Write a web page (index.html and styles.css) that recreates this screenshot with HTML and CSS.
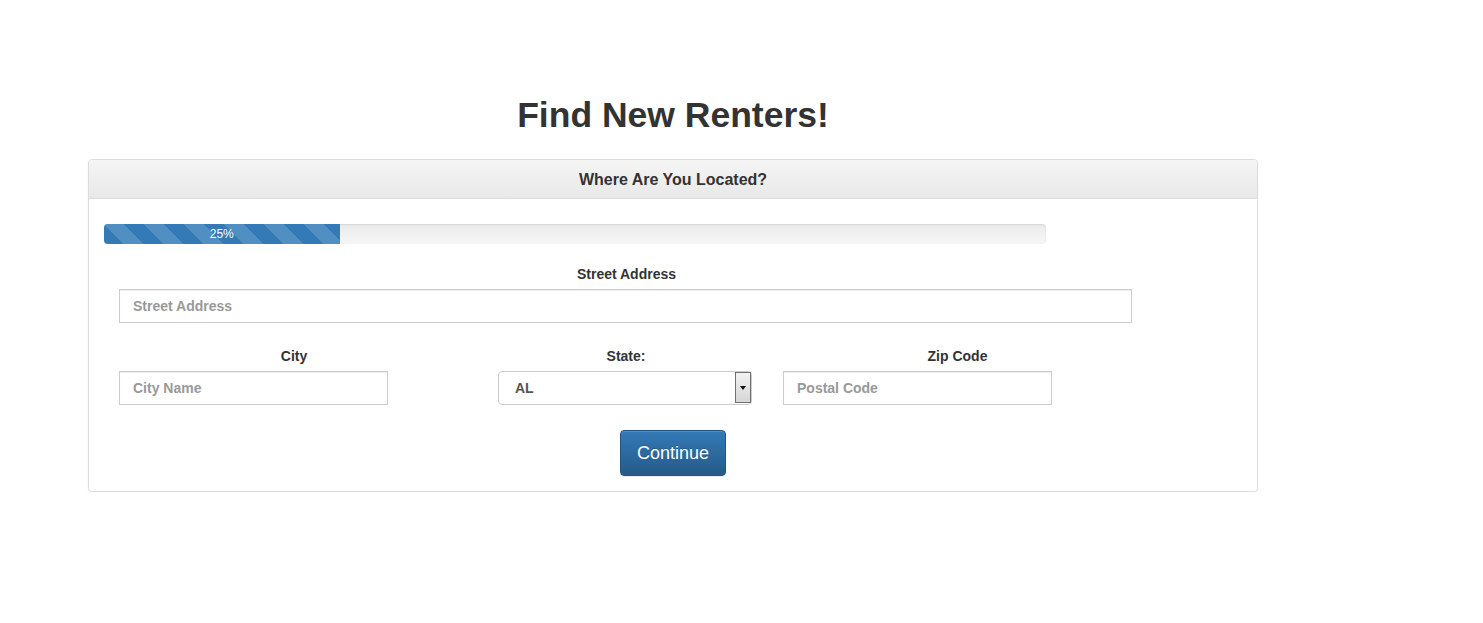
FILE: index.html
```html
<!DOCTYPE html>
<html>
<head>
<meta charset="utf-8">
<title>Find New Renters!</title>
<link rel="stylesheet" href="styles.css">
</head>
<body>
<div class="container">
  <h1 class="title">Find New Renters!</h1>
  <div class="panel">
    <div class="panel-heading">Where Are You Located?</div>
    <div class="panel-body">
      <div class="progress">
        <div class="progress-bar" style="width:25%">25%</div>
      </div>
      <form class="form">
        <div class="group full">
          <label class="label">Street Address</label>
          <input class="input wide" type="text" placeholder="Street Address">
        </div>
        <div class="row">
          <div class="group city">
            <label class="label">City</label>
            <input class="input short" type="text" placeholder="City Name">
          </div>
          <div class="group state">
            <label class="label">State:</label>
            <div class="select-wrap">
              <select class="select"><option>AL</option></select>
              <span class="select-btn"><span class="caret"></span></span>
            </div>
          </div>
          <div class="group zip">
            <label class="label">Zip Code</label>
            <input class="input short" type="text" placeholder="Postal Code">
          </div>
        </div>
      </form>
      <div class="actions">
        <button class="btn" type="button">Continue</button>
      </div>
    </div>
  </div>
</div>
</body>
</html>
```
FILE: styles.css
```css
* { box-sizing: border-box; }
body {
  margin: 0;
  font-family: "Liberation Sans", Arial, sans-serif;
  font-size: 14px;
  color: #333;
  background: #fff;
}
.container {
  width: 1170px;
  margin-left: 88px;
  padding-top: 95px;
}
.title {
  margin: 0 0 24px;
  height: 40px;
  font-size: 35.5px;
  line-height: 40px;
  font-weight: bold;
  text-align: center;
  color: #333;
}
.panel {
  border: 1px solid #ddd;
  border-radius: 4px;
  box-shadow: 0 1px 2px rgba(0,0,0,.05);
  background: #fff;
}
.panel-heading {
  padding: 11px 15px 9px;
  line-height: 18px;
  font-size: 16px;
  font-weight: bold;
  text-align: center;
  color: #333;
  background: linear-gradient(to bottom, #f5f5f5 0%, #e8e8e8 100%);
  border-bottom: 1px solid #ddd;
  border-radius: 3px 3px 0 0;
}
.panel-body {
  padding: 25px 15px 15px;
}
.progress {
  width: 942px;
  height: 20px;
  background: linear-gradient(to bottom, #ebebeb 0%, #f5f5f5 100%);
  border-radius: 4px;
  box-shadow: inset 0 1px 2px rgba(0,0,0,.1);
  overflow: hidden;
}
.progress-bar {
  height: 20px;
  line-height: 20px;
  font-size: 12px;
  color: #fff;
  text-align: center;
  background-color: #337ab7;
  background-image: linear-gradient(45deg, rgba(255,255,255,.15) 25%, transparent 25%, transparent 50%, rgba(255,255,255,.15) 50%, rgba(255,255,255,.15) 75%, transparent 75%, transparent);
  background-size: 40px 40px;
}
.form {
  margin-top: 20px;
  padding-left: 15px;
  width: 1030px;
}
.group {
  display: flex;
  flex-direction: column;
}
.label {
  display: block;
  font-weight: bold;
  line-height: 20px;
  text-align: center;
  margin-bottom: 5px;
  color: #333;
}
.input {
  height: 34px;
  padding: 6px 13px;
  font-family: inherit;
  font-size: 14px;
  font-weight: bold;
  color: #555;
  border: 1px solid #ccc;
  border-radius: 0;
  box-shadow: inset 0 1px 1px rgba(0,0,0,.075);
  outline: none;
}
.input::placeholder { color: #999; }
.wide { width: 1013px; }
.short { width: 269px; }
.row {
  display: flex;
  margin-top: 23px;
}
.city { width: 350px; flex: none; }
.state { width: 314px; flex: none; }
.zip { width: 349px; flex: none; }
.select-wrap {
  position: relative;
  width: 254px;
  height: 34px;
  margin-left: 29px;
}
.select {
  appearance: none;
  -webkit-appearance: none;
  width: 100%;
  height: 34px;
  padding: 6px 16px;
  font-family: inherit;
  font-size: 14px;
  font-weight: bold;
  color: #555;
  background: #fff;
  border: 1px solid #ccc;
  border-radius: 4px;
  outline: none;
}
.select-btn {
  position: absolute;
  right: 1px;
  top: 1px;
  bottom: 2px;
  width: 16px;
  border: 1px solid #707070;
  background: linear-gradient(to bottom, #f2f2f2 0%, #d6d6d6 100%);
  display: flex;
  align-items: center;
  justify-content: center;
}
.caret {
  width: 0;
  height: 0;
  border-left: 3.5px solid transparent;
  border-right: 3.5px solid transparent;
  border-top: 4px solid #111;
}
.actions {
  display: flex;
  justify-content: center;
  margin-top: 25px;
}
.btn {
  height: 46px;
  padding: 10px 16px;
  font-family: inherit;
  font-size: 18px;
  line-height: 24px;
  color: #fff;
  background: linear-gradient(to bottom, #337ab7 0%, #265a88 100%);
  border: 1px solid #245580;
  border-radius: 4px;
  box-shadow: inset 0 1px 0 rgba(255,255,255,.15), 0 1px 1px rgba(0,0,0,.075);
  text-shadow: 0 -1px 0 rgba(0,0,0,.2);
  cursor: pointer;
}
```
